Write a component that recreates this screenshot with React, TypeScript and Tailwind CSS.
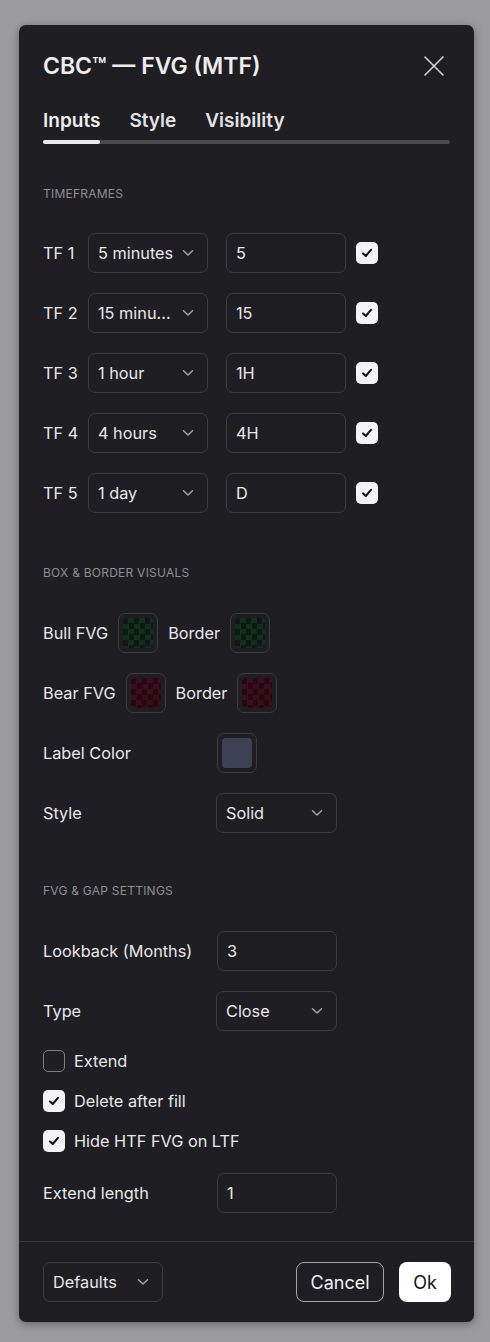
import React from 'react';

const font = { fontFamily: 'Inter, "Noto Sans", sans-serif' };

function Chevron() {
    return (
        <svg width="12" height="8" viewBox="0 0 12 8" fill="none" className="shrink-0">
            <path d="M1.5 1.8 L6 6 L10.5 1.8" stroke="#a2a2a7" strokeWidth="1.5" strokeLinecap="round" strokeLinejoin="round" />
        </svg>
    );
}

function Check() {
    return (
        <svg width="14" height="14" viewBox="0 0 14 14" fill="none">
            <path d="M3 7.4 L5.8 10 L11 3.8" stroke="#111113" strokeWidth="2" strokeLinecap="round" strokeLinejoin="round" />
        </svg>
    );
}

function Select({ value, w = 'w-[120px]' }: { value: string; w?: string }) {
    return (
        <div className={`${w} h-10 shrink-0 flex items-center justify-between pl-[9px] pr-[13px] rounded-[7px] border border-[#3d3c41] text-[16.3px] text-[#e8e8ea]`}>
            <span className="whitespace-nowrap">{value}</span>
            <Chevron />
        </div>
    );
}

function Input({ value, w = 'w-[120px]' }: { value: string; w?: string }) {
    return (
        <div className={`${w} h-10 shrink-0 flex items-center pl-[9px] rounded-[7px] border border-[#3d3c41] text-[16.3px] text-[#e8e8ea]`}>
            {value}
        </div>
    );
}

function Checkbox({ on }: { on: boolean }) {
    if (!on) {
        return <div className="w-[22px] h-[22px] shrink-0 rounded-[5px] border border-[#7c7c81]" />;
    }
    return (
        <div className="w-[22px] h-[22px] shrink-0 rounded-[5px] bg-[#f4f4f6] flex items-center justify-center">
            <Check />
        </div>
    );
}

function Swatch({ kind }: { kind: 'bull' | 'bear' | 'label' }) {
    const inner =
        kind === 'bull'
            ? 'bg-[conic-gradient(#12301d_25%,#0d1a12_0_50%,#12301d_0_75%,#0d1a12_0)] bg-[length:11px_11px]'
            : kind === 'bear'
              ? 'bg-[conic-gradient(#3e0d1c_25%,#230a12_0_50%,#3e0d1c_0_75%,#230a12_0)] bg-[length:11px_11px]'
              : 'bg-[#3e4054]';
    return (
        <div className="w-10 h-10 shrink-0 rounded-[7px] border border-[#3d3c41] p-[4px]">
            <div className={`w-full h-full rounded-[4px] ${inner}`} />
        </div>
    );
}

function SectionLabel({ children, className = '' }: { children: React.ReactNode; className?: string }) {
    return <div className={`text-[12px] leading-4 text-[#8e8d93] uppercase tracking-[0.02em] ${className}`}>{children}</div>;
}

// the select shows its label already clipped, as in the app
const tfs = [
    { tf: 'TF 1', sel: '5 minutes', val: '5' },
    { tf: 'TF 2', sel: '15 minu...', val: '15' },
    { tf: 'TF 3', sel: '1 hour', val: '1H' },
    { tf: 'TF 4', sel: '4 hours', val: '4H' },
    { tf: 'TF 5', sel: '1 day', val: 'D' },
];

export default function App() {
    return (
        <div style={font} className="w-[490px] h-[1342px] bg-[#9b9a9d] pl-[19px] pt-[25px]">
            <div className="w-[455px] rounded-[7px] bg-[#1f1e22] shadow-[0_2px_8px_rgba(0,0,0,0.35)] text-[#e8e8ea] text-[16.3px]">
                <div className="px-6 pt-[27px]">
                    {/* header */}
                    <div className="h-7 flex items-center justify-between">
                        <h1 className="text-[23px] font-semibold text-[#ededef] leading-7">CBC™ — FVG (MTF)</h1>
                        <svg width="22" height="22" viewBox="0 0 22 22" fill="none" className="mr-[5px]">
                            <path d="M2 2 L20 20 M20 2 L2 20" stroke="#d4d4d8" strokeWidth="1.6" strokeLinecap="round" />
                        </svg>
                    </div>

                    {/* tabs */}
                    <div className="mt-[27px] flex gap-[29px] text-[19px] font-semibold leading-7">
                        <span className="text-[#ededef]">Inputs</span>
                        <span className="text-[#e2e2e5]">Style</span>
                        <span className="text-[#e2e2e5]">Visibility</span>
                    </div>
                    <div className="mt-[5px] h-1 rounded-full bg-[#4a494e] flex">
                        <div className="w-[57px] h-1 rounded-full bg-[#e9e9ec]" />
                    </div>

                    {/* timeframes */}
                    <SectionLabel className="mt-[42px]">Timeframes</SectionLabel>
                    <div className="mt-[31px] flex flex-col gap-5">
                        {tfs.map((r) => (
                            <div key={r.tf} className="flex items-center">
                                <span className="w-[45px] shrink-0">{r.tf}</span>
                                <Select value={r.sel} />
                                <div className="w-[18px]" />
                                <Input value={r.val} />
                                <div className="w-[10px]" />
                                <Checkbox on />
                            </div>
                        ))}
                    </div>

                    {/* box & border */}
                    <SectionLabel className="mt-[52px]">Box &amp; Border Visuals</SectionLabel>
                    <div className="mt-[32px] flex flex-col gap-5">
                        <div className="flex items-center gap-[10px]">
                            <span>Bull FVG</span>
                            <Swatch kind="bull" />
                            <span>Border</span>
                            <Swatch kind="bull" />
                        </div>
                        <div className="flex items-center gap-[10px]">
                            <span>Bear FVG</span>
                            <Swatch kind="bear" />
                            <span>Border</span>
                            <Swatch kind="bear" />
                        </div>
                        <div className="flex items-center">
                            <span className="w-[174px] shrink-0">Label Color</span>
                            <Swatch kind="label" />
                        </div>
                        <div className="flex items-center">
                            <span className="w-[173px] shrink-0">Style</span>
                            <Select value="Solid" w="w-[121px]" />
                        </div>
                    </div>

                    {/* fvg & gap */}
                    <SectionLabel className="mt-[50px]">FVG &amp; Gap Settings</SectionLabel>
                    <div className="mt-[32px] flex flex-col gap-5">
                        <div className="flex items-center">
                            <span className="w-[174px] shrink-0">Lookback (Months)</span>
                            <Input value="3" />
                        </div>
                        <div className="flex items-center">
                            <span className="w-[173px] shrink-0">Type</span>
                            <Select value="Close" w="w-[121px]" />
                        </div>
                    </div>
                    <div className="mt-[19px] flex flex-col gap-[18px]">
                        <label className="flex items-center gap-[9px] h-[22px]">
                            <Checkbox on={false} />
                            <span>Extend</span>
                        </label>
                        <label className="flex items-center gap-[9px] h-[22px]">
                            <Checkbox on />
                            <span>Delete after fill</span>
                        </label>
                        <label className="flex items-center gap-[9px] h-[22px]">
                            <Checkbox on />
                            <span>Hide HTF FVG on LTF</span>
                        </label>
                    </div>
                    <div className="mt-[21px] flex items-center">
                        <span className="w-[174px] shrink-0">Extend length</span>
                        <Input value="1" />
                    </div>
                </div>

                {/* footer */}
                <div className="mt-[28px] border-t border-[#38373c] pl-6 pr-[23px] pt-[20px] pb-[20px] flex items-center justify-between">
                    <Select value="Defaults" w="w-[120px]" />
                    <div className="flex items-center gap-[15px]">
                        <button className="h-10 w-[88px] rounded-[8px] border border-[#a3a3a8] text-[18px] text-[#f0f0f2]">Cancel</button>
                        <button className="h-10 w-[52px] rounded-[8px] bg-white text-[18px] text-[#111113]">Ok</button>
                    </div>
                </div>
            </div>
        </div>
    );
}
